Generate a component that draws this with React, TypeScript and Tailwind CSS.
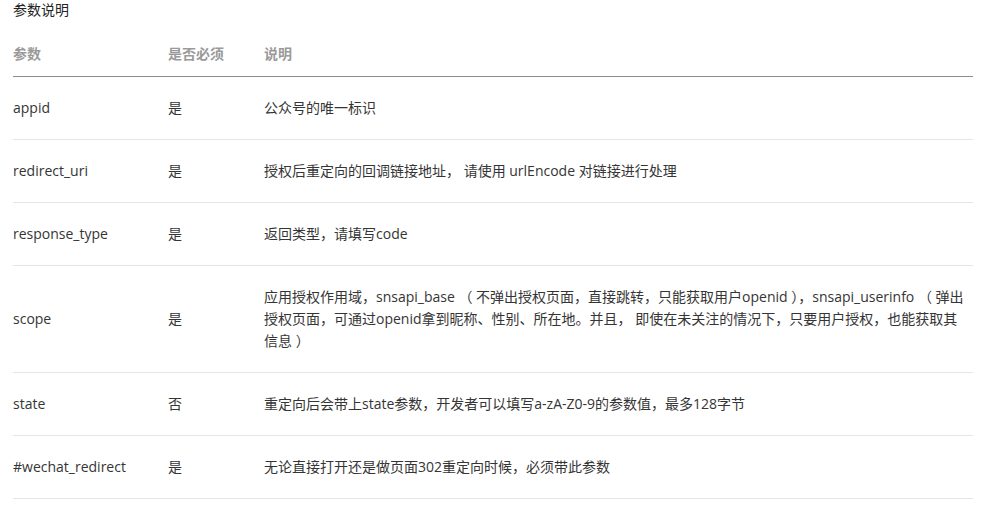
import React from 'react'

interface Param { name: string; required: string; desc: React.ReactNode }

const params: Param[] = [
  { name: 'appid', required: '是', desc: '公众号的唯一标识' },
  { name: 'redirect_uri', required: '是', desc: '授权后重定向的回调链接地址， 请使用 urlEncode 对链接进行处理' },
  { name: 'response_type', required: '是', desc: '返回类型，请填写code' },
  {
    name: 'scope',
    required: '是',
    desc: (
      <>
        应用授权作用域，snsapi_base （ 不弹出授权页面，直接跳转，只能获取用户openid ），snsapi_userinfo （ 弹出<br />
        授权页面，可通过openid拿到昵称、性别、所在地。并且， 即使在未关注的情况下，只要用户授权，也能获取其<br />
        信息 ）
      </>
    ),
  },
  { name: 'state', required: '否', desc: '重定向后会带上state参数，开发者可以填写a-zA-Z0-9的参数值，最多128字节' },
  { name: '#wechat_redirect', required: '是', desc: '无论直接打开还是做页面302重定向时候，必须带此参数' },
]

export default function App() {
  return (
    <div className="min-h-screen bg-white text-[14px] text-[#353535]" style={{ fontFamily: '"Open Sans", "Noto Sans CJK SC", sans-serif' }}>
      <div className="pl-[13px] pr-[33px]">
        <h3 className="h-[22px] leading-[20px] text-[14px] font-normal text-[#222]">参数说明</h3>
        <table className="w-full border-collapse">
          <thead>
            <tr className="border-b border-[#8c8c8c]">
              <th className="w-[155px] h-[54px] pt-[10px] text-left font-bold text-[14px] text-[#9a9a9a]">参数</th>
              <th className="w-[96px] h-[54px] pt-[10px] text-left font-bold text-[14px] text-[#9a9a9a]">是否必须</th>
              <th className="h-[54px] pt-[10px] text-left font-bold text-[14px] text-[#9a9a9a]">说明</th>
            </tr>
          </thead>
          <tbody>
            {params.map(p => (
              <tr key={p.name} className="border-b border-[#e5e5e5]">
                <td className="py-[20px] leading-[22px] align-middle">{p.name}</td>
                <td className="py-[20px] leading-[22px] align-middle">{p.required}</td>
                <td className="py-[20px] leading-[22px] align-middle">{p.desc}</td>
              </tr>
            ))}
          </tbody>
        </table>
      </div>
    </div>
  )
}
